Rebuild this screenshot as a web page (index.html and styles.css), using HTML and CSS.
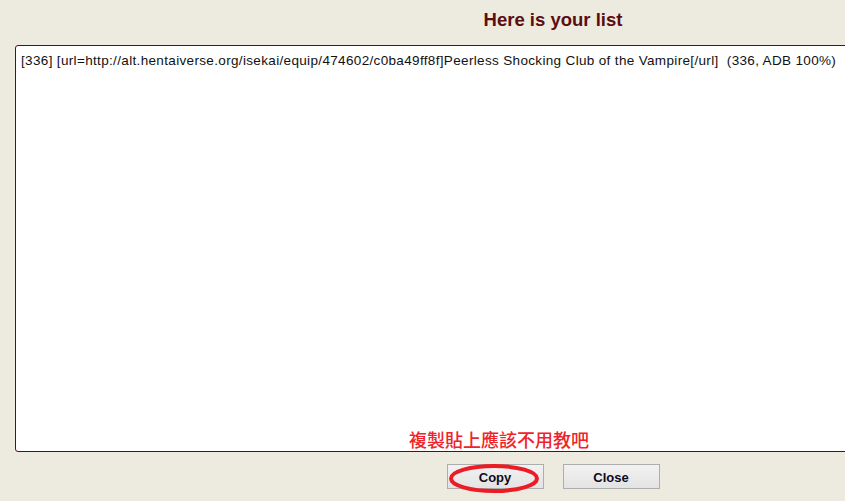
FILE: index.html
```html
<!DOCTYPE html>
<html lang="en">
<head>
<meta charset="utf-8">
<title>Here is your list</title>
<link rel="stylesheet" href="styles.css">
</head>
<body>
<div class="panel">
  <h1 class="title">Here is your list</h1>
  <textarea class="list" spellcheck="false">[336] [url=http://alt.hentaiverse.org/isekai/equip/474602/c0ba49ff8f]Peerless Shocking Club of the Vampire[/url]  (336, ADB 100%)</textarea>
  <div class="actions">
    <div class="btn-wrap">
      <button class="btn" type="button">Copy</button>
      <svg class="circle-mark" width="96" height="33" viewBox="0 0 96 33" aria-hidden="true">
        <ellipse cx="48" cy="16.5" rx="43" ry="12.5" fill="none" stroke="#ec1c24" stroke-width="4"/>
      </svg>
    </div>
    <button class="btn" type="button">Close</button>
  </div>
  <div class="note">複製貼上應該不用教吧</div>
</div>
</body>
</html>
```

FILE: styles.css
```css
html, body {
  margin: 0;
  padding: 0;
  background: #edebdf;
  overflow: hidden;
}

body {
  width: 845px;
  height: 501px;
  font-family: "Liberation Sans", Arial, sans-serif;
}

.panel {
  position: relative;
  width: 1106px;
  display: flex;
  flex-direction: column;
  align-items: center;
}

.title {
  margin: 9px 0 0;
  font-size: 18.5px;
  line-height: 21px;
  font-weight: bold;
  color: #5c0d11;
}

.list {
  box-sizing: border-box;
  margin: 15px 0 0;
  width: 1076px;
  height: 407px;
  padding: 7px 4px 7px 5px;
  border: 1px solid #5c0d11;
  border-radius: 3px;
  background: #ffffff;
  color: #111111;
  font-family: "Liberation Sans", Arial, sans-serif;
  font-size: 13.5px;
  letter-spacing: 0.34px;
  line-height: 15px;
  resize: none;
  outline: none;
  overflow: hidden;
  white-space: pre;
}

.actions {
  display: flex;
  gap: 19px;
  margin-top: 12px;
}

.btn-wrap {
  position: relative;
  display: flex;
}

.btn {
  box-sizing: border-box;
  width: 97px;
  height: 25px;
  padding: 1px 0 0;
  border: 1px solid #adadad;
  border-radius: 0;
  background: linear-gradient(#f2f2f2, #e3e3e3);
  color: #0c0c1c;
  font-family: "Liberation Sans", Arial, sans-serif;
  font-size: 13px;
  font-weight: bold;
}

.circle-mark {
  position: absolute;
  left: -1px;
  top: -2px;
  pointer-events: none;
}

.note {
  position: absolute;
  left: 409px;
  top: 428px;
  font-family: "Noto Sans CJK TC", "Noto Sans CJK SC", sans-serif;
  font-size: 18px;
  font-weight: 500;
  line-height: 22px;
  color: #f0232b;
}
```
